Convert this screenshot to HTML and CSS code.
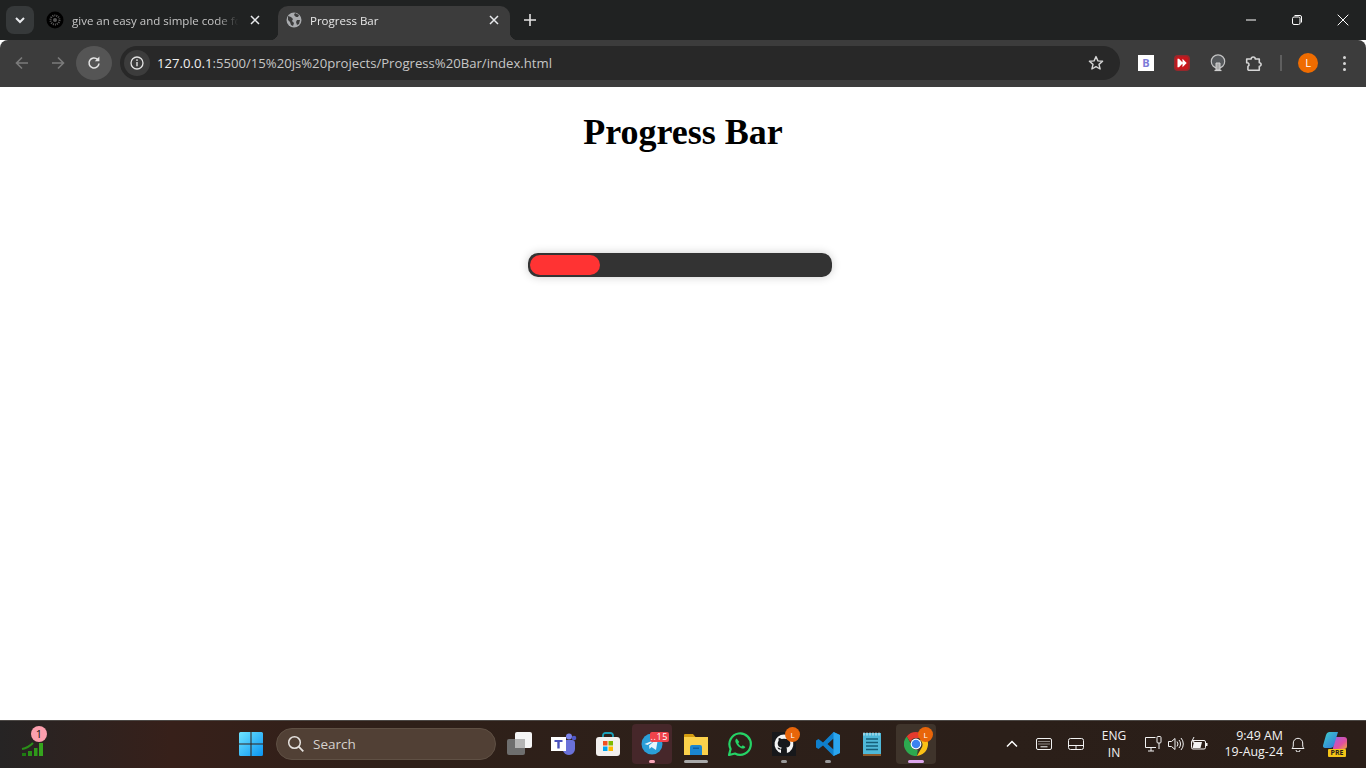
FILE: index.html
```html
<!DOCTYPE html>
<html lang="en">
<head>
    <meta charset="UTF-8">
    <meta name="viewport" content="width=device-width, initial-scale=1.0">
    <title>Progress Bar</title>
    <link rel="stylesheet" href="styles.css">
</head>
<body>
    <!-- Tab strip -->
    <div class="tabstrip">
        <button class="tab-search">
            <svg width="12" height="12" viewBox="0 0 12 12"><path d="M2 4l4 4 4-4" fill="none" stroke="#e8eaed" stroke-width="2"/></svg>
        </button>
        <div class="tab">
            <svg class="favicon" width="18" height="18" viewBox="0 0 18 18">
                <circle cx="9" cy="9" r="8.5" fill="#000"/>
                <circle cx="9" cy="9" r="4.5" fill="none" stroke="#5c5c5c" stroke-width="2" stroke-dasharray="1 1"/>
                <circle cx="9" cy="9" r="2" fill="#555"/>
            </svg>
            <span class="tab-title">give an easy and simple code fo</span>
            <svg class="tab-close" width="10" height="10" viewBox="0 0 10 10"><path d="M1 1l8 8M9 1l-8 8" stroke="#e8eaed" stroke-width="1.5"/></svg>
        </div>
        <div class="tab tab-active">
            <svg class="favicon" width="16" height="16" viewBox="0 0 16 16">
                <circle cx="8" cy="8" r="7.5" fill="#a9abae"/>
                <path d="M2 4l3 1 2 2-1 2 2 2-1 3-2-1-1-3-2-2zM9 1l4 2-1 2-2 0-2-2zM11 8l3 0-1 4-2 1-1-3z" fill="#3c3c3c"/>
            </svg>
            <span class="tab-title">Progress Bar</span>
            <svg class="tab-close" width="10" height="10" viewBox="0 0 10 10"><path d="M1 1l8 8M9 1l-8 8" stroke="#e8eaed" stroke-width="1.5"/></svg>
        </div>
        <svg class="new-tab" width="12" height="12" viewBox="0 0 12 12"><path d="M6 0v12M0 6h12" stroke="#e3e3e3" stroke-width="1.6"/></svg>
        <div class="window-controls">
            <div class="win-btn"><svg width="12" height="12" viewBox="0 0 12 12"><path d="M1 6h10" stroke="#fff"/></svg></div>
            <div class="win-btn"><svg width="12" height="12" viewBox="0 0 12 12"><rect x="1.5" y="3" width="7.5" height="7.5" rx="1.5" fill="none" stroke="#fff"/><path d="M3.5 1.5h5.5a1.5 1.5 0 0 1 1.5 1.5v5.5" fill="none" stroke="#fff"/></svg></div>
            <div class="win-btn"><svg width="12" height="12" viewBox="0 0 12 12"><path d="M.7.7l10.6 10.6M11.3.7L.7 11.3" stroke="#fff"/></svg></div>
        </div>
    </div>

    <!-- Toolbar -->
    <div class="toolbar">
        <div class="nav-btn">
            <svg width="16" height="16" viewBox="0 0 16 16"><path d="M14 8H2.5M8 2.5L2.5 8 8 13.5" fill="none" stroke="#7b7b7b" stroke-width="1.6"/></svg>
        </div>
        <div class="nav-btn">
            <svg width="16" height="16" viewBox="0 0 16 16"><path d="M2 8h11.5M8 2.5L13.5 8 8 13.5" fill="none" stroke="#7b7b7b" stroke-width="1.6"/></svg>
        </div>
        <div class="nav-btn reload">
            <svg width="16" height="16" viewBox="0 0 16 16"><path d="M13 8.5A5 5 0 1 1 11.5 4.4" fill="none" stroke="#e3e3e3" stroke-width="1.6"/><path d="M13.4 1.6v4.6H8.8z" fill="#e3e3e3"/></svg>
        </div>
        <div class="omnibox">
            <div class="site-info">
                <svg width="14" height="14" viewBox="0 0 14 14"><circle cx="7" cy="7" r="6" fill="none" stroke="#e3e3e3" stroke-width="1.3"/><path d="M7 6v4.2" stroke="#e3e3e3" stroke-width="1.4"/><circle cx="7" cy="4.1" r=".9" fill="#e3e3e3"/></svg>
            </div>
            <div class="url"><span class="url-host">127.0.0.1</span>:5500/15%20js%20projects/Progress%20Bar/index.html</div>
            <svg class="star" width="16" height="16" viewBox="0 0 16 16"><path d="M8 1.6l1.9 4.3 4.7.4-3.6 3.1 1.1 4.6L8 11.6 3.9 14l1.1-4.6-3.6-3.1 4.7-.4z" fill="none" stroke="#d6d6d6" stroke-width="1.4" stroke-linejoin="round"/></svg>
        </div>
        <div class="ext ext-first">
            <div class="ext-b">B</div>
        </div>
        <div class="ext">
            <svg width="16" height="16" viewBox="0 0 16 16"><rect x=".8" y=".8" width="14.4" height="14.4" rx="3" fill="#c8161c" stroke="#96282c" stroke-width="1.6"/><path d="M3.500 3.800h1.500L9 8l-4 4.200H3.500zM8.500 3.800L12.700 8l-4.200 4.200z" fill="#fff"/></svg>
        </div>
        <div class="ext">
            <svg width="16" height="18" viewBox="0 0 16 18"><circle cx="8" cy="7.500" r="6.700" fill="#55585b" stroke="#c4c4c4" stroke-width="1.200"/><path d="M6 16V9h4v7z" fill="#a9a9a9" stroke="#d0d0d0"/><path d="M4.500 16.500h7" stroke="#d0d0d0" stroke-width="1.200"/></svg>
        </div>
        <div class="ext">
            <svg width="18" height="18" viewBox="0 0 16 16"><path d="M1.500 4.500h4a1.800 1.800 0 0 1 3.600 0h3.600v3.200a1.600 1.600 0 0 1 0 3.200v3.600H3.200l-.6-.6V11a1.700 1.700 0 0 0-1.100-3.200z" fill="none" stroke="#d6d6d6" stroke-width="1.400" stroke-linejoin="round"/></svg>
        </div>
        <div class="toolbar-sep"></div>
        <div class="avatar">L</div>
        <div class="menu-dots"><i></i><i></i><i></i></div>
    </div>

    <!-- Page content -->
    <div class="page">
        <h1 class="heading">Progress Bar</h1>
        <div class="progress">
            <div class="progress-fill"></div>
        </div>
    </div>

    <!-- Windows taskbar -->
    <div class="taskbar">
        <div class="widget">
            <svg width="22" height="16" viewBox="0 0 22 16">
                <path d="M1 8q6-1 11-6" fill="none" stroke="#2a8f18" stroke-width="2"/>
                <rect x="1" y="12" width="4" height="3" fill="#1e7d12"/>
                <rect x="7" y="10" width="4" height="5" fill="#2a8f18"/>
                <rect x="13" y="7" width="3.500" height="8" fill="#2f9a1a"/>
                <rect x="18" y="2" width="4" height="13" fill="#35a51d"/>
            </svg>
            <span class="widget-badge">1</span>
        </div>

        <div class="task-center">
            <div class="start">
                <svg width="24" height="24" viewBox="0 0 24 24">
                    <defs>
                        <linearGradient id="win" x1="0" y1="0" x2="1" y2="1"><stop offset="0" stop-color="#6fe4ff"/><stop offset="1" stop-color="#0a94f2"/></linearGradient>
                    </defs>
                    <path d="M0 1.500A1.500 1.500 0 0 1 1.500 0H11.500V11.500H0zM12.500 0H22.500A1.500 1.500 0 0 1 24 1.500V11.500H12.500zM0 12.500H11.500V24H1.500A1.500 1.500 0 0 1 0 22.500zM12.500 12.500H24V22.500A1.500 1.500 0 0 1 22.500 24H12.500z" fill="url(#win)"/>
                </svg>
            </div>
            <div class="search">
                <svg width="18" height="18" viewBox="0 0 18 18"><circle cx="7.500" cy="7.500" r="5.800" fill="none" stroke="#e6e2df" stroke-width="1.500"/><path d="M11.700 11.700l4.600 4.600" stroke="#e6e2df" stroke-width="1.800"/></svg>
                <span>Search</span>
            </div>

            <div class="app">
                <svg width="26" height="24" viewBox="0 0 26 24">
                    <rect x="0" y="7" width="18" height="16" rx="2" fill="#6e6e6e"/>
                    <rect x="8" y="0" width="17" height="16" rx="2" fill="#f5f5f5"/>
                    <rect x="8" y="7" width="10" height="9" fill="#b4b4b4"/>
                </svg>
            </div>
            <div class="app">
                <svg width="26" height="24" viewBox="0 0 26 24">
                    <circle cx="18" cy="4.500" r="3" fill="#7b83eb"/>
                    <circle cx="23" cy="6" r="2.300" fill="#5059c9"/>
                    <path d="M12 8h9a3 3 0 0 1 3 3v6a6 6 0 0 1-6 6 7 7 0 0 1-6-4z" fill="#6a71d8"/>
                    <rect x="0" y="5" width="15" height="14" fill="#fff"/>
                    <path d="M3.500 8h8v2H8.700v6.500H6.300V10H3.500z" fill="#4b53bc"/>
                </svg>
            </div>
            <div class="app">
                <svg width="24" height="24" viewBox="0 0 24 24">
                    <path d="M7 7V3.500A2.500 2.500 0 0 1 9.500 1h5A2.500 2.500 0 0 1 17 3.500V7" fill="none" stroke="#1aa0b8" stroke-width="1.800"/>
                    <rect x="0" y="5" width="24" height="19" rx="3" fill="#f2f0ee"/>
                    <rect x="7" y="9" width="4.500" height="4.500" fill="#f25022"/>
                    <rect x="12.500" y="9" width="4.500" height="4.500" fill="#7fba00"/>
                    <rect x="7" y="14.500" width="4.500" height="4.500" fill="#00a4ef"/>
                    <rect x="12.500" y="14.500" width="4.500" height="4.500" fill="#ffb900"/>
                </svg>
            </div>
            <div class="app app-open app-telegram">
                <svg width="22" height="22" viewBox="0 0 22 22">
                    <circle cx="11" cy="11" r="10.500" fill="#2a9ed8"/>
                    <path d="M3.500 11L17 5.500 15 17l-4.500-3-2 2-.5-3.500 6-5-7.500 4.500z" fill="#e8f4fb"/>
                </svg>
                <span class="app-count">..15</span>
                <span class="app-dot app-dot-pink"></span>
            </div>
            <div class="app">
                <svg width="24" height="24" viewBox="0 0 24 24">
                    <path d="M0 3a1 1 0 0 1 1-1h8l2.500 3H24v3H0z" fill="#d39c10"/>
                    <rect x="0" y="5" width="24" height="18" fill="#fbd14b"/>
                    <path d="M6 15a2 2 0 0 1 2-2h8a2 2 0 0 1 2 2v8H6z" fill="#1a86d0"/>
                    <rect x="9" y="15.500" width="6" height="1.500" fill="#0d5fa3"/>
                </svg>
                <span class="app-dash"></span>
            </div>
            <div class="app">
                <svg width="24" height="24" viewBox="0 0 24 24">
                    <path d="M1 23l1.600-6A10.700 10.700 0 1 1 7 21.500z" fill="none" stroke="#25d366" stroke-width="2.200" stroke-linejoin="round"/>
                    <path d="M8.700 6.500c-1.500.8-1.800 2.500-.8 4.500 1.200 2.500 3 4.200 5.400 5.200 1.800.7 3.400.3 4.100-1.200l-2.600-1.700-1.300 1.200c-1.400-.6-2.600-1.800-3.300-3.300l1.100-1.200z" fill="#25d366"/>
                </svg>
            </div>
            <div class="app">
                <svg width="24" height="24" viewBox="0 0 24 24">
                    <rect width="24" height="24" fill="#17181b"/>
                    <path d="M12 2.500a9.500 9.500 0 0 0-3 18.500v-3.500c-2.500.5-3.200-1-3.500-2l2 .5c.5.800 1 1 1.800.8l.4-1.200c-2.300-.4-4-1.500-4-4.200 0-1.200.4-2 1-2.700-.1-.5-.3-1.500.1-2.700 1 0 2 .5 2.800 1.100a9.500 9.500 0 0 1 4.800 0c.8-.6 1.800-1.100 2.800-1.100.4 1.200.2 2.200.1 2.700.6.700 1 1.500 1 2.700 0 2.700-1.700 3.800-4 4.200.4.400.6 1 .6 1.800V21A9.500 9.500 0 0 0 12 2.500z" fill="#f4f4f4"/>
                </svg>
                <span class="app-avatar">L</span>
                <span class="app-dot"></span>
            </div>
            <div class="app">
                <svg width="24" height="24" viewBox="0 0 24 24">
                    <path d="M17.500 0L24 3v18l-6.500 3L7 13.500 2.500 17 0 15.500V8.500L2.500 7 7 10.500zM17.500 6.500L11.500 12l6 5.500z" fill="#0f7fcc"/>
                    <path d="M17.500 0L24 3v18l-6.500 3z" fill="#2aa5ee"/>
                </svg>
                <span class="app-dot"></span>
            </div>
            <div class="app">
                <svg width="20" height="24" viewBox="0 0 20 24">
                    <rect x="1" y="1" width="18" height="23" fill="#8a5a2c"/>
                    <rect x="1" y="1" width="18" height="21" fill="#4fb8d8"/>
                    <path d="M2 .5v3M5 .5v3M8 .5v3M11 .5v3M14 .5v3M17 .5v3" stroke="#d8eef5"/>
                    <path d="M4 7h12M4 10.500h12M4 14h12M4 17.500h12" stroke="#155e78" stroke-width="1.500"/>
                </svg>
            </div>
            <div class="app app-open app-chrome">
                <svg width="24" height="24" viewBox="0 0 24 24">
                    <path d="M12 0a12 12 0 0 1 10.400 6H12a6 6 0 0 0-5.700 4.100L2.700 4.400A12 12 0 0 1 12 0z" fill="#e33b2e"/>
                    <path d="M22.400 6A12 12 0 0 1 12.900 24l4.300-7.500A6 6 0 0 0 16.200 8z" fill="#fbc116"/>
                    <path d="M12.900 24A12 12 0 0 1 2.700 4.400l5.200 9a5 5 0 0 0 4.100 4.600 6 6 0 0 0 1.800-.3z" fill="#2da94f"/>
                    <circle cx="12" cy="12" r="5.400" fill="#fff"/>
                    <circle cx="12" cy="12" r="4.300" fill="#3b82f0"/>
                </svg>
                <span class="app-avatar">L</span>
                <span class="app-dash app-dash-pink"></span>
            </div>
        </div>

        <div class="tray">
            <div class="tray-item tray-chevron">
                <svg width="12" height="8" viewBox="0 0 12 8"><path d="M1 6.500l5-5 5 5" fill="none" stroke="#fff" stroke-width="1.500"/></svg>
            </div>
            <div class="tray-item tray-keyboard">
                <svg width="16" height="12" viewBox="0 0 16 12"><rect x=".5" y=".5" width="15" height="11" rx="1.500" fill="none" stroke="#f2f2f2"/><path d="M2.500 3.500h11M2.500 6h11" stroke="#f2f2f2" stroke-dasharray="1 1"/><path d="M4.500 8.800h7" stroke="#f2f2f2"/></svg>
            </div>
            <div class="tray-item tray-touchpad">
                <svg width="16" height="12" viewBox="0 0 16 12"><rect x=".5" y=".5" width="15" height="11" rx="2" fill="none" stroke="#f2f2f2"/><path d="M.5 7.500h15M8 7.500v4" stroke="#f2f2f2"/></svg>
            </div>
            <div class="lang">ENG<br>IN</div>
            <div class="tray-item tray-net">
                <svg width="17" height="16" viewBox="0 0 17 16"><path d="M11 11.500H.5v-10h10" fill="none" stroke="#f2f2f2"/><path d="M3 15h6M6 11.500V15" stroke="#f2f2f2"/><rect x="12" y=".5" width="4" height="6.500" rx="1" fill="none" stroke="#f2f2f2"/><path d="M14 7v6" stroke="#f2f2f2"/></svg>
            </div>
            <div class="tray-item tray-sound">
                <svg width="17" height="14" viewBox="0 0 17 14"><path d="M.5 4.500h3L7 1.500v11l-3.500-3h-3z" fill="none" stroke="#f2f2f2"/><path d="M9 4.500a4 4 0 0 1 0 5M11 3a6 6 0 0 1 0 8M13 1a9 9 0 0 1 0 12" fill="none" stroke="#f2f2f2"/></svg>
            </div>
            <div class="tray-item tray-battery">
                <svg width="17" height="14" viewBox="0 0 17 14"><rect x=".5" y="3.500" width="14" height="8.500" rx="1.500" fill="none" stroke="#f2f2f2"/><path d="M3 5h8l-1.500 6H1.500z" fill="#f2f2f2"/><path d="M15 6v3h1.500V6z" fill="#f2f2f2"/><path d="M3 0L1 4h2L2 6" fill="none" stroke="#f2f2f2"/></svg>
            </div>
            <div class="clock">9:49 AM<br>19-Aug-24</div>
            <div class="tray-item tray-bell">
                <svg width="14" height="15" viewBox="0 0 14 15"><path d="M1 11.500c1-1 1.300-2 1.300-3.500V6a4.700 4.700 0 0 1 9.400 0v2c0 1.500.3 2.500 1.300 3.500z" fill="none" stroke="#f2f2f2" stroke-linejoin="round"/><path d="M5 13a2 2 0 0 0 4 0" fill="none" stroke="#f2f2f2"/></svg>
            </div>
            <div class="copilot">
                <svg width="24" height="20" viewBox="0 0 24 20">
                    <defs>
                        <linearGradient id="cop1" x1="0" y1="0" x2="1" y2="1"><stop offset="0" stop-color="#3fd0c8"/><stop offset="1" stop-color="#2f6fe0"/></linearGradient>
                        <linearGradient id="cop2" x1="0" y1="0" x2="1" y2="1"><stop offset="0" stop-color="#a05de0"/><stop offset=".6" stop-color="#e04fa0"/><stop offset="1" stop-color="#f0a63a"/></linearGradient>
                    </defs>
                    <path d="M11 5h10a3 3 0 0 1 3 3v6a3 3 0 0 1-3 3H10z" fill="url(#cop2)"/>
                    <path d="M6 0h9l-4 13a4 4 0 0 1-4 3H2a2 2 0 0 1-2-2.500L3 3a4 4 0 0 1 3-3z" fill="url(#cop1)"/>
                </svg>
                <span class="pre-badge">PRE</span>
            </div>
        </div>
    </div>
</body>
</html>
```

FILE: styles.css
```css
* {
    box-sizing: border-box;
}
body {
    margin: 0;
    height: 100vh;
    display: flex;
    flex-direction: column;
    overflow: hidden;
    font-family: "Open Sans", "Noto Sans", sans-serif;
    background-color: #fff;
}

/* Tab strip */
.tabstrip {
    height: 40px;
    flex: none;
    display: flex;
    align-items: flex-end;
    padding-left: 6px;
    background-color: #202222;
}
.tab-search {
    width: 28px;
    height: 28px;
    margin-bottom: 6px;
    padding: 0;
    display: flex;
    align-items: center;
    justify-content: center;
    border: none;
    border-radius: 8px;
    background-color: #36393a;
}
.tab {
    width: 232px;
    height: 34px;
    margin-left: 6px;
    padding: 0 12px 6px 6px;
    display: flex;
    align-items: center;
    color: #c7c7c7;
    font-size: 11.5px;
}
.tab-active {
    position: relative;
    padding: 0 11px 6px 8px;
    color: #e8e8e8;
    border-radius: 10px 10px 0 0;
    background-color: #3c3c3c;
}
.tab-active::before,
.tab-active::after {
    content: "";
    position: absolute;
    bottom: 0;
    width: 8px;
    height: 8px;
}
.tab-active::before {
    left: -8px;
    background: radial-gradient(circle at 0 0, #202222 8px, #3c3c3c 8.5px);
}
.tab-active::after {
    right: -8px;
    background: radial-gradient(circle at 100% 0, #202222 8px, #3c3c3c 8.5px);
}
.favicon {
    flex: none;
}
.tab-title {
    flex: 1;
    margin-left: 8px;
    white-space: nowrap;
    overflow: hidden;
    -webkit-mask-image: linear-gradient(to right, #000 85%, transparent 98%);
    mask-image: linear-gradient(to right, #000 85%, transparent 98%);
}
.tab-close {
    flex: none;
    margin-left: 8px;
}
.new-tab {
    margin: 0 0 14px 14px;
}
.window-controls {
    margin-left: auto;
    align-self: flex-start;
    display: flex;
}
.win-btn {
    width: 46px;
    height: 40px;
    display: flex;
    align-items: center;
    justify-content: center;
}

/* Toolbar */
.toolbar {
    height: 47px;
    flex: none;
    display: flex;
    align-items: center;
    padding: 0 0 1px 4px;
    border-radius: 8px 8px 0 0;
    background-color: #3c3c3c;
}
.nav-btn {
    width: 36px;
    height: 34px;
    display: flex;
    align-items: center;
    justify-content: center;
}
.reload {
    border-radius: 50%;
    background-color: #555;
}
.omnibox {
    width: 1000px;
    height: 34px;
    margin-left: 8px;
    padding: 0 16px 0 4px;
    display: flex;
    align-items: center;
    border-radius: 17px;
    background-color: #282828;
}
.site-info {
    width: 26px;
    height: 26px;
    display: flex;
    align-items: center;
    justify-content: center;
    border-radius: 50%;
    background-color: #3c3c3c;
}
.url {
    flex: 1;
    margin-left: 7px;
    font-size: 13.15px;
    color: #c6c6c6;
    white-space: nowrap;
}
.url-host {
    color: #f0f0f0;
}
.ext {
    width: 36px;
    display: flex;
    justify-content: center;
    align-items: center;
}
.ext-first {
    width: 44px;
    padding-right: 10px;
    justify-content: flex-end;
}
.ext-b {
    width: 16px;
    height: 16px;
    background-color: #fff;
    color: #7c7cd8;
    font-size: 11px;
    font-weight: 700;
    line-height: 16px;
    text-align: center;
}
.toolbar-sep {
    width: 2px;
    height: 16px;
    margin: 0 8px;
    background-color: #5f5f5f;
}
.avatar {
    width: 20px;
    height: 20px;
    margin: 0 8px;
    border-radius: 50%;
    background-color: #ef6c00;
    color: #fff;
    font-size: 11px;
    line-height: 20px;
    text-align: center;
}
.menu-dots {
    width: 36px;
    display: flex;
    flex-direction: column;
    align-items: center;
    gap: 3px;
}
.menu-dots i {
    width: 3px;
    height: 3px;
    border-radius: 50%;
    background-color: #d6d6d6;
}

/* Page */
.page {
    flex: 1;
    background-color: #fff;
}
.heading {
    margin: 24px 0 0;
    text-align: center;
    font-family: "Liberation Serif", "Times New Roman", serif;
    font-size: 36px;
    font-weight: 700;
    color: #000;
}
.progress {
    width: 304px;
    height: 24px;
    margin: 100px 0 0 528px;
    padding: 2px;
    border-radius: 10px;
    background-color: #333;
    box-shadow: 0 0 10px rgba(0, 0, 0, 0.2);
}
.progress-fill {
    width: 70px;
    height: 20px;
    border-radius: 10px;
    background-color: #f33;
}

/* Taskbar */
.taskbar {
    height: 48px;
    flex: none;
    display: flex;
    align-items: center;
    padding-bottom: 1px;
    border-top: 1px solid #4c4845;
    color: #fff;
    background: linear-gradient(to right, #262424 0, #37201a 170px, #2f2019 400px, #2b1f19 1000px, #2a1e18 100%);
}
.widget {
    position: relative;
    width: 22px;
    height: 16px;
    margin: 8px 0 0 21px;
}
.widget-badge {
    position: absolute;
    top: -14px;
    left: 10px;
    width: 16px;
    height: 16px;
    border-radius: 50%;
    background-color: #fc9fae;
    color: #111;
    font-size: 11px;
    line-height: 16px;
    text-align: center;
}
.task-center {
    display: flex;
    align-items: center;
    margin-left: 186px;
}
.start {
    width: 44px;
    display: flex;
    justify-content: center;
}
.search {
    width: 220px;
    height: 32px;
    margin: 0 2px 0 3px;
    padding-left: 10px;
    display: flex;
    align-items: center;
    gap: 8px;
    border: 1px solid #5f5044;
    border-radius: 16px;
    background-color: #514035;
    color: #d6d2cf;
    font-size: 13.5px;
}
.app {
    position: relative;
    width: 44px;
    height: 40px;
    display: flex;
    align-items: center;
    justify-content: center;
}
.app-open {
    width: 40px;
    border-radius: 4px;
}
.app-telegram {
    margin: 0 2px;
    background-color: #46272a;
}
.app-chrome {
    margin-left: 2px;
    background-color: #3f342b;
}
.app-count {
    position: absolute;
    top: 8px;
    right: 3px;
    height: 10px;
    padding: 0 1px;
    background-color: #f0434b;
    color: #fff;
    border-radius: 2px;
    font-size: 9px;
    line-height: 10px;
    letter-spacing: 0.6px;
}
.app-avatar {
    position: absolute;
    top: 3px;
    right: 6px;
    width: 15px;
    height: 15px;
    border-radius: 50%;
    background-color: #e8650a;
    color: #fff;
    font-size: 8px;
    line-height: 15px;
    text-align: center;
}
.app-chrome .app-avatar {
    right: 3px;
}
.app-dot {
    position: absolute;
    bottom: 1px;
    left: 19px;
    width: 6px;
    height: 3px;
    border-radius: 2px;
    background-color: #9a9a9a;
}
.app-telegram .app-dot {
    left: 17px;
}
.app-dot-pink {
    background-color: #f8a6b8;
}
.app-dash {
    position: absolute;
    bottom: 1px;
    left: 10px;
    width: 24px;
    height: 3px;
    border-radius: 2px;
    background-color: #a8a8a8;
}
.app-dash-pink {
    left: 12px;
    width: 16px;
    background-color: #dda6ec;
}

/* System tray */
.tray {
    flex: 1;
    display: flex;
    align-items: center;
    font-size: 12px;
    color: #f2f2f2;
}
.tray-item {
    display: flex;
    align-items: center;
    justify-content: center;
}
.tray-chevron {
    margin-left: 70px;
}
.tray-keyboard {
    margin-left: 18px;
}
.tray-touchpad {
    margin-left: 16px;
}
.lang {
    width: 40px;
    margin-left: 10px;
    text-align: center;
    line-height: 17px;
}
.tray-net {
    margin-left: 11px;
}
.tray-sound {
    margin-left: 6px;
}
.tray-battery {
    margin-left: 6px;
}
.clock {
    margin-left: 7px;
    width: 68px;
    font-size: 12.4px;
    text-align: right;
    line-height: 16px;
}
.tray-bell {
    margin-left: 8px;
}
.copilot {
    position: relative;
    margin-left: 18px;
    height: 24px;
}
.pre-badge {
    position: absolute;
    left: 5px;
    bottom: -1px;
    width: 18px;
    height: 8px;
    border-radius: 1px;
    background-color: #f5c518;
    color: #2b1f19;
    font-size: 7px;
    font-weight: 700;
    line-height: 8px;
    text-align: center;
}
```
